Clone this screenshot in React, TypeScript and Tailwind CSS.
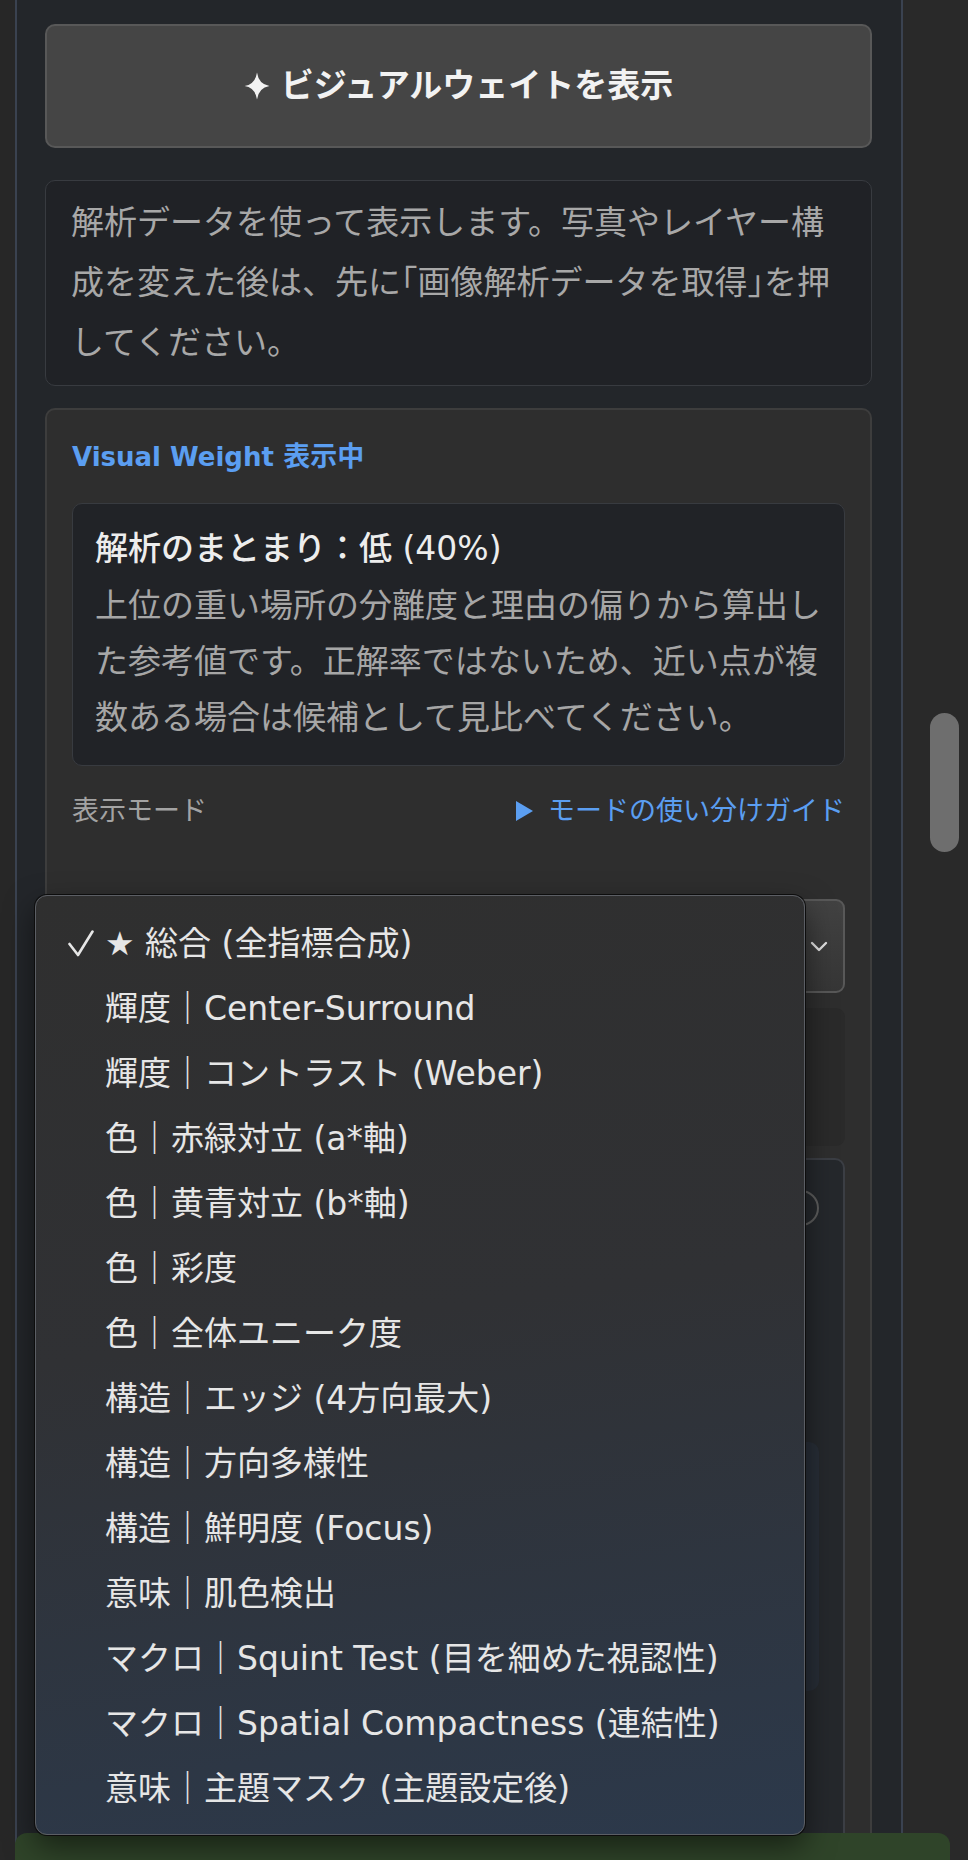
import React from 'react';

type Mode = { label: string; checked?: boolean };

const modes: Mode[] = [
  { label: '★ 総合 (全指標合成)', checked: true },
  { label: '輝度｜Center-Surround' },
  { label: '輝度｜コントラスト (Weber)' },
  { label: '色｜赤緑対立 (a*軸)' },
  { label: '色｜黄青対立 (b*軸)' },
  { label: '色｜彩度' },
  { label: '色｜全体ユニーク度' },
  { label: '構造｜エッジ (4方向最大)' },
  { label: '構造｜方向多様性' },
  { label: '構造｜鮮明度 (Focus)' },
  { label: '意味｜肌色検出' },
  { label: 'マクロ｜Squint Test (目を細めた視認性)' },
  { label: 'マクロ｜Spatial Compactness (連結性)' },
  { label: '意味｜主題マスク (主題設定後)' },
];

const Sparkle = () => (
  <svg width="26" height="28" viewBox="0 0 24 26" className="shrink-0">
    <path d="M12 0.5 Q13.6 11.4 23.5 13 Q13.6 14.6 12 25.5 Q10.4 14.6 0.5 13 Q10.4 11.4 12 0.5 Z" fill="#f2f2f2" />
  </svg>
);

const App: React.FC = () => {
  const half = "[font-feature-settings:'halt']";

  return (
    <div className="relative h-[1860px] w-[968px] overflow-hidden bg-[#282828] font-['DejaVu_Sans','Noto_Sans_CJK_JP',sans-serif]">
      <div className="flex h-full">
        <div className="w-[15px] shrink-0 bg-[#272727]" />

        {/* side panel */}
        <main className="w-[888px] shrink-0 border-x-2 border-[#3a4250] bg-[#23262a] pl-[28px] pr-[29px] pt-[24px]">
          <button className="flex h-[124px] w-full items-center justify-center gap-[11px] rounded-[10px] border-2 border-[#585858] bg-[#454545] text-[33px] font-bold text-[#f2f2f2]">
            <Sparkle />
            <span>ビジュアルウェイトを表示</span>
          </button>

          <div className="mt-[32px] rounded-[10px] border border-[#383b40] bg-[#202226] px-[25px] py-[12px] text-[33px] leading-[60px] text-[#a8a8a8]">
            解析データを使って表示します。写真やレイヤー構
            <br />
            成を変えた後は、先に<span className={half}>「</span>画像解析データを取得<span className={half}>」</span>を押
            <br />
            してください。
          </div>

          <section className="mt-[22px] h-[1500px] rounded-[10px] border-2 border-[#3d3d3d] bg-[#2e2e2e] px-[25px] pt-[27px]">
            <div className="text-[27px] font-bold leading-[40px] text-[#5b9ef1]">
              <span className="text-[26px]">Visual Weight</span> 表示中
            </div>

            <div className="mt-[26px] rounded-[10px] border border-[#383b40] bg-[#212327] px-[22px] pt-[16px] pb-[19px]">
              <div className="text-[33px] font-medium leading-[58px] text-[#ededed]">解析のまとまり：低 (40%)</div>
              <p className="text-[33px] leading-[56px] text-[#a6a6a6]">
                上位の重い場所の分離度と理由の偏りから算出し
                <br />
                た参考値です。正解率ではないため、近い点が複
                <br />
                数ある場合は候補として見比べてください。
              </p>
            </div>

            <div className="mt-[25px] flex items-center justify-between text-[27px] leading-[40px]">
              <span className="text-[#a3a3a3]">表示モード</span>
              <span className="flex items-center text-[#5b9ef1]">
                <svg width="19" height="22" viewBox="0 0 19 22" className="mr-[14px]">
                  <path d="M1 1 L18 11 L1 21 Z" fill="#5b9ef1" />
                </svg>
                モードの使い分けガイド
              </span>
            </div>

            {/* select (covered by the open menu) */}
            <div className="mt-[68px] flex h-[94px] items-center justify-end rounded-[9px] border-2 border-[#585858] bg-[linear-gradient(180deg,#424242,#363636)] pr-[15px]">
              <svg width="18" height="11" viewBox="0 0 18 11">
                <path d="M2 2 L9 9 L16 2" fill="none" stroke="#e0e0e0" strokeWidth="2.4" strokeLinecap="round" strokeLinejoin="round" />
              </svg>
            </div>

            <div className="mt-[15px] h-[138px] rounded-[9px] bg-[#2a2a2a]" />

            <div className="mt-[12px] h-[800px] rounded-[10px] border-2 border-[#3b3e44] bg-[#25282c]">
              <div className="flex justify-end pt-[30px] pr-[24px]">
                <div className="h-[36px] w-[36px] rounded-full border-2 border-[#5c5c5c]" />
              </div>
              <div className="mx-[24px] mt-[216px] h-[249px] rounded-[10px] bg-[#272d36]" />
            </div>
          </section>
        </main>

        {/* scrollbar */}
        <div className="flex-1 bg-[#292929] pl-[27px] pt-[713px]">
          <div className="h-[139px] w-[29px] rounded-full bg-[#6e6e6e]" />
        </div>
      </div>

      {/* open mode menu */}
      <ul className="absolute left-[35px] top-[895px] z-20 h-[940px] w-[770px] rounded-[12px] border border-[#5b5e64] bg-[linear-gradient(172deg,#2f2f2f_0%,#303134_45%,#2c394b_100%)] py-[15px] shadow-[0_0_0_1px_#0d0d0d,0_12px_30px_rgba(0,0,0,0.5)]">
        {modes.map((m) => (
          <li key={m.label} className="flex h-[65px] items-center pl-[32px] text-[33px] text-[#e6e6e6]">
            <span className="flex w-[37px] shrink-0 items-center">
              {m.checked && (
                <svg width="26" height="27" viewBox="0 0 26 27">
                  <polyline points="1.5,14 10,25 24.5,1.5" fill="none" stroke="#e6e6e6" strokeWidth="2.6" strokeLinecap="round" strokeLinejoin="round" />
                </svg>
              )}
            </span>
            <span className="whitespace-nowrap">{m.label}</span>
          </li>
        ))}
      </ul>

      {/* bottom action bar */}
      <div className="absolute bottom-0 left-[15px] z-10 h-[27px] w-[935px] rounded-t-[12px] bg-[#2f4429]" />
    </div>
  );
};

export default App;
